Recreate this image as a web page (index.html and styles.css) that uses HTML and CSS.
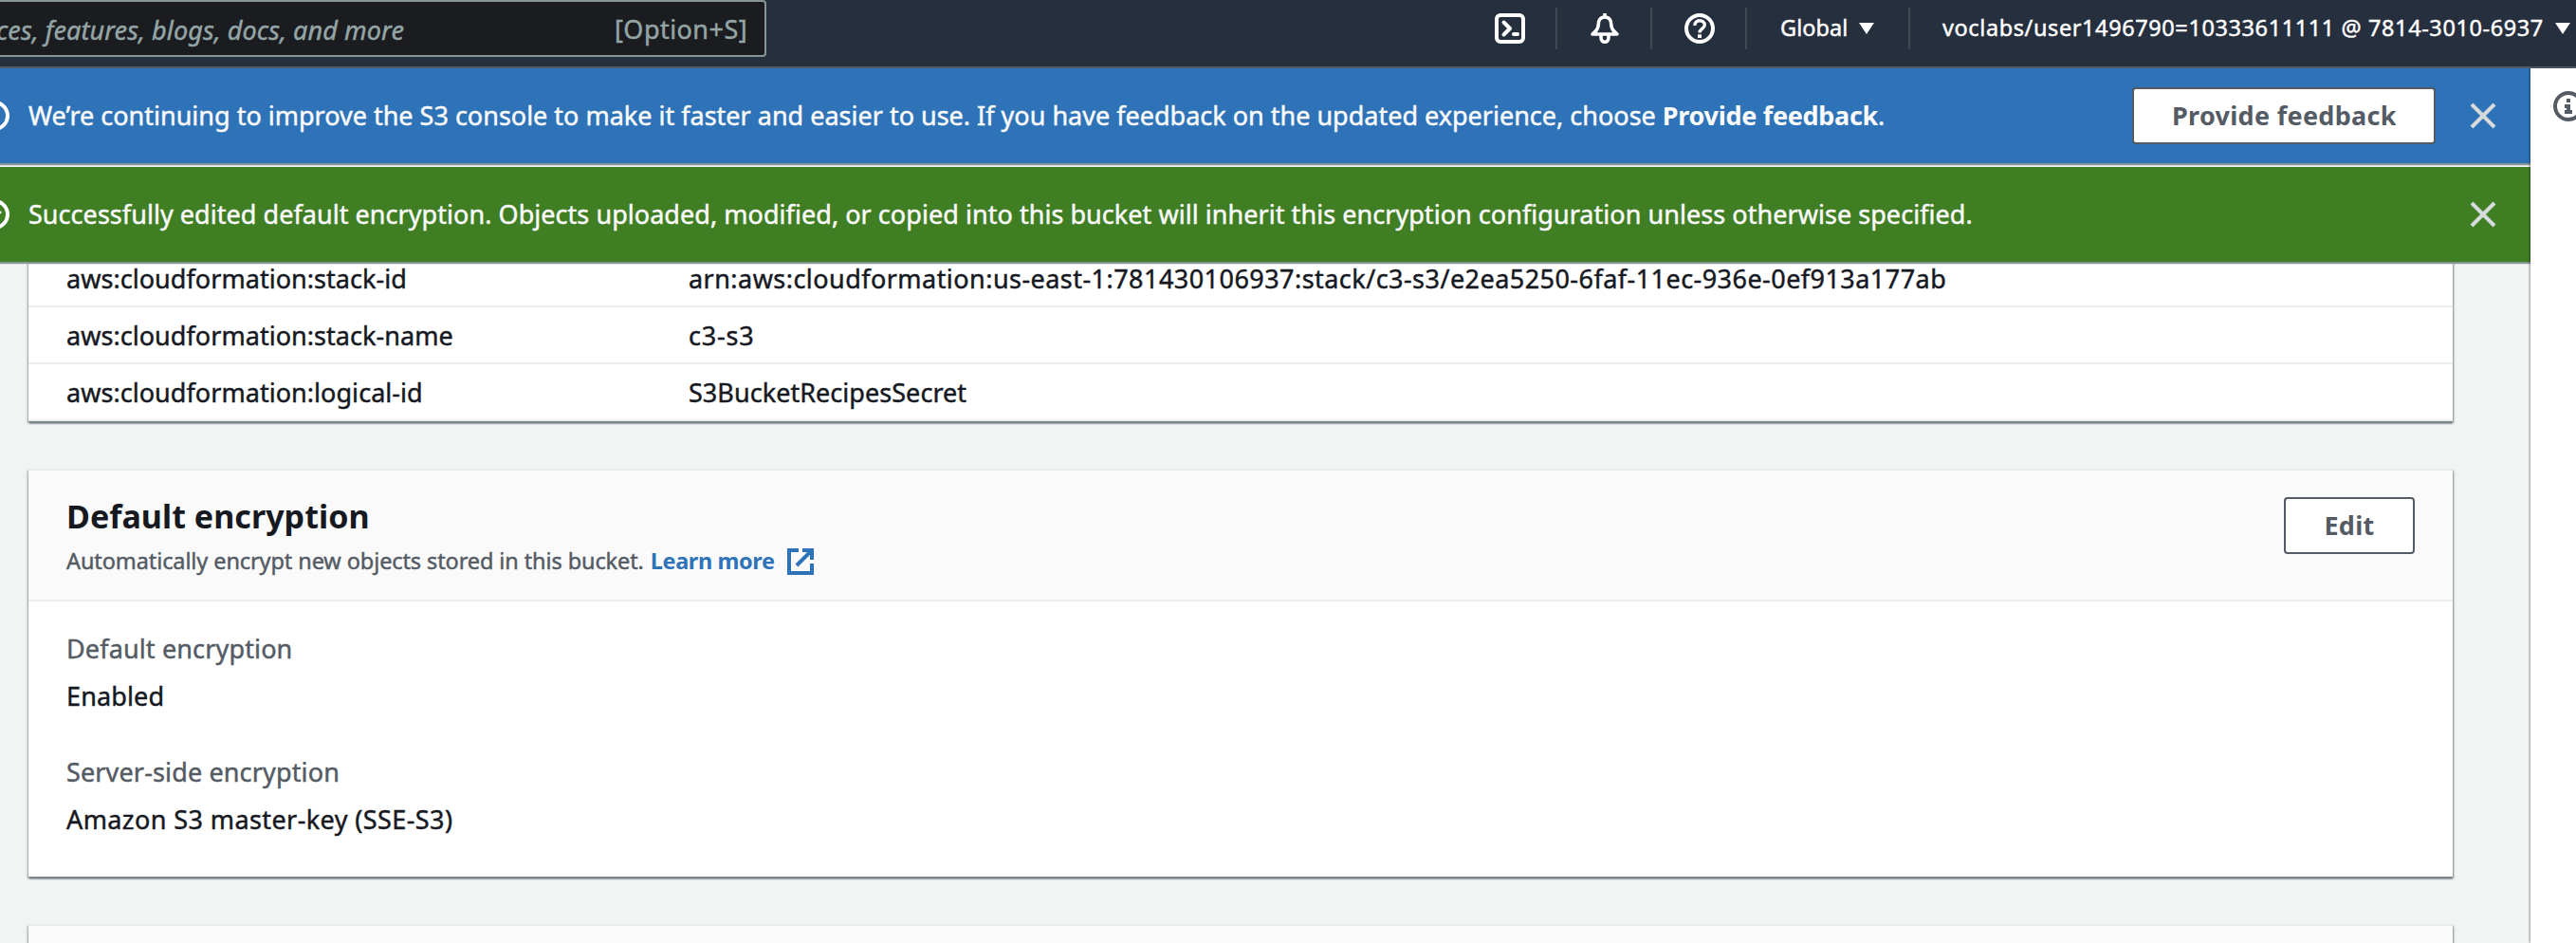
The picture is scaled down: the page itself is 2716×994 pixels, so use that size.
FILE: index.html
```
<!DOCTYPE html>
<html lang="en">
<head>
<meta charset="utf-8">
<title>S3 Management Console</title>
<link rel="stylesheet" href="styles.css">
</head>
<body>
<header class="topbar">
  <div class="search">
    <span class="search-hint">ces, features, blogs, docs, and more</span>
    <span class="search-key">[Option+S]</span>
  </div>
  <nav class="nav">
    <div class="nav-icon">
      <svg width="32" height="32" viewBox="0 0 32 32" fill="none" stroke="#fff" stroke-width="4"><rect x="2" y="2" width="28" height="28" rx="4"/><path d="M9.500 9.500l6.500 6.500-6.500 6.500" stroke-linejoin="round" stroke-linecap="round"/><path d="M20 22h4" stroke-linecap="round"/></svg>
    </div>
    <div class="nav-icon">
      <svg width="32" height="32" viewBox="0 0 32 32" fill="none" stroke="#fff" stroke-width="3.6"><path d="M16 0v4"/><path d="M16 4c-4.800 0-6.800 3.600-6.800 8 0 4.500-2.200 6.500-6.200 10h26c-4-3.500-6.200-5.500-6.200-10 0-4.400-2-8-6.800-8z" stroke-linejoin="round"/><path d="M12 22v3.500c0 2.900 1.800 4.700 4 4.700s4-1.800 4-4.700V22"/></svg>
    </div>
    <div class="nav-icon">
      <svg width="32" height="32" viewBox="0 0 32 32" fill="none" stroke="#fff" stroke-width="4"><circle cx="16" cy="16" r="14"/><path d="M10.800 13c0-3.300 2.200-5.200 5.200-5.200s5.300 1.900 5.300 4.500c0 3.800-5.300 3.900-5.300 8.200" stroke-width="3.400"/><path d="M16 22.300v3.700"/></svg>
    </div>
    <div class="nav-item">Global<i class="caret"></i></div>
    <div class="nav-item account">voclabs/user1496790=10333611111 @ 7814-3010-6937<i class="caret"></i></div>
  </nav>
</header>
<div class="shell">
  <main class="main">
    <div class="flash info">
      <svg class="flash-icon" width="32" height="32" viewBox="0 0 32 32" fill="none" stroke="#fff" stroke-width="4"><circle cx="16" cy="16" r="14"/><path d="M14 10h4M12 16h4v6M12 22h8"/></svg>
      <p class="flash-text">We’re continuing to improve the S3 console to make it faster and easier to use. If you have feedback on the updated experience, choose <b>Provide feedback</b>.</p>
      <button class="btn feedback">Provide feedback</button>
      <svg class="close" width="28" height="28" viewBox="0 0 28 28" stroke="#d5dbdb" stroke-width="4"><path d="M2 2l24 24M26 2L2 26"/></svg>
    </div>
    <div class="flash success">
      <svg class="flash-icon" width="32" height="32" viewBox="0 0 32 32" fill="none" stroke="#fff" stroke-width="4"><circle cx="16" cy="16" r="14"/><path d="M9 16l5 5 8.500-8.500"/></svg>
      <p class="flash-text">Successfully edited default encryption. Objects uploaded, modified, or copied into this bucket will inherit this encryption configuration unless otherwise specified.</p>
      <svg class="close" width="28" height="28" viewBox="0 0 28 28" stroke="#d5dbdb" stroke-width="4"><path d="M2 2l24 24M26 2L2 26"/></svg>
    </div>
    <div class="content">
      <section class="card tags">
        <div class="row"><span>aws:cloudformation:stack-id</span><span class="arn">arn:aws:cloudformation:us-east-1:781430106937:stack/c3-s3/e2ea5250-6faf-11ec-936e-0ef913a177ab</span></div>
        <div class="row"><span>aws:cloudformation:stack-name</span><span class="short">c3-s3</span></div>
        <div class="row"><span>aws:cloudformation:logical-id</span><span>S3BucketRecipesSecret</span></div>
      </section>
      <section class="card">
        <div class="card-head">
          <div>
            <h2>Default encryption</h2>
            <p class="desc"><span>Automatically encrypt new objects stored in this bucket.</span><a>Learn more</a>
              <svg width="28" height="28" viewBox="0 0 28 28" fill="none" stroke="#2e73b8" stroke-width="4"><path d="M12 2H2v24h24V16M16 2h10v10M26 2L10 18"/></svg></p>
          </div>
          <button class="btn">Edit</button>
        </div>
        <dl class="fields">
          <div><dt>Default encryption</dt><dd>Enabled</dd></div>
          <div><dt>Server-side encryption</dt><dd class="algo">Amazon S3 master-key (SSE-S3)</dd></div>
        </dl>
      </section>
      <section class="card next"></section>
    </div>
  </main>
  <aside class="help">
    <svg width="32" height="32" viewBox="0 0 32 32" fill="none" stroke="#545b64" stroke-width="4"><circle cx="16" cy="16" r="14"/><path d="M14 10h4M12 16h4v6M12 22h8"/></svg>
  </aside>
</div>
</body>
</html>
```
FILE: styles.css
```
* { box-sizing: border-box; }
body {
  margin: 0;
  height: 994px;
  overflow: hidden;
  display: flex;
  flex-direction: column;
  background: #f2f3f3;
  color: #16191f;
  font: 400 27px/50px "Noto Sans", "Open Sans", sans-serif;
  letter-spacing: 0.045px;
  -webkit-text-stroke: 0.45px currentColor;
  white-space: nowrap;
}
p, h2, dl, dd { margin: 0; }
svg { display: block; flex: none; }
b, a, h2, button { -webkit-text-stroke: 0; }

.topbar {
  flex: none;
  height: 72px;
  display: flex;
  justify-content: space-between;
  align-items: flex-start;
  background: #262f3e;
  border-bottom: 2px solid #545b64;
}
.search {
  width: 808px;
  height: 60px;
  display: flex;
  justify-content: space-between;
  padding: 5px 18px 0 0;
  background: #1a1c20;
  border: 2px solid #879596;
  border-left: 0;
  border-radius: 0 4px 4px 0;
  color: #95a5a6;
}
.search-hint {
  width: 426px;
  display: flex;
  justify-content: flex-end;
  font-style: italic;
  letter-spacing: 0.1px;
}
.search-key { letter-spacing: 0.45px; margin-top: -1px; }
.nav {
  display: flex;
  align-items: center;
  height: 44px;
  margin-top: 8px;
  color: #fff;
  font-size: 23.5px;
}
.nav-icon {
  width: 100px;
  height: 44px;
  padding-left: 2px;
  display: flex;
  align-items: center;
  justify-content: center;
  border-right: 2px solid #414750;
}
.nav-item {
  height: 44px;
  width: 172px;
  padding-left: 35px;
  line-height: 42px;
  display: flex;
  border-right: 2px solid #414750;
}
.account { width: 702px; padding-left: 34px; border: 0; letter-spacing: 0.6px; }
.caret {
  margin: 16px 0 0 12px;
  width: 0;
  height: 0;
  border: 8px solid transparent;
  border-bottom: 0;
  border-top: 12px solid #fff;
}

.shell { flex: 1; display: flex; min-height: 0; }
.main { width: 2668px; display: flex; flex-direction: column; }
.help {
  flex: 1;
  padding: 24px 0 0 24px;
  background: #fff;
  overflow: hidden;
  box-shadow: -1px 0 2px rgba(0, 7, 22, 0.4);
  position: relative;
}

.flash {
  flex: none;
  height: 100px;
  display: flex;
  align-items: center;
  color: #fafafa;
  padding-right: 36px;
  box-shadow: 0 2px 1px #879596;
  position: relative;
}
.info { background: #2e73b8; margin-bottom: 4px; letter-spacing: 0; }
.success { background: #3f7e23; }
.flash-icon { margin: 0 20px 0 -22px; }
.flash-text { flex: 1; }
.flash-text b { letter-spacing: -0.3px; }
.close { margin-left: 36px; }

.btn {
  height: 60px;
  padding: 0 40px;
  background: #fff;
  border: 2px solid #545b64;
  border-radius: 4px;
  color: #545b64;
  font: 700 27px/50px "Noto Sans", "Open Sans", sans-serif;
  letter-spacing: 0.3px;
}
.feedback { width: 320px; }

.content { flex: 1; min-height: 0; padding: 0 82px 0 30px; overflow: hidden; }
.card {
  background: #fff;
  margin-bottom: 50px;
  border-top: 2px solid #eaeded;
  box-shadow: 0 2px 2px -0.5px #77828a, 1px 2px 2px rgba(0, 28, 36, 0.35), -1px 2px 2px rgba(0, 28, 36, 0.35);
}
.tags { border: 0; margin-top: -12px; }
.row {
  height: 60px;
  display: grid;
  grid-template-columns: 656px 1fr;
  align-items: center;
  padding: 2px 0 0 40px;
  border-bottom: 2px solid #eaeded;
}
.arn { letter-spacing: 0.455px; }
.short { letter-spacing: 0.8px; }
.card-head {
  height: 138px;
  padding: 26px 40px 0;
  display: flex;
  justify-content: space-between;
  align-items: flex-start;
  background: #fafafa;
  border-bottom: 2px solid #eaeded;
}
.card-head .btn { width: 138px; margin-top: 2px; }
h2 { font-size: 34px; line-height: 44px; letter-spacing: 0.04px; }
.desc {
  display: flex;
  margin-top: 9px;
  font-size: 23.5px;
  line-height: 32px;
  color: #545b64;
  letter-spacing: -0.1px;
}
.desc a { color: #2e73b8; font-weight: 700; margin: 0 13px 0 7px; letter-spacing: -0.4px; }
.desc svg { margin-top: 3px; }
.fields {
  height: 290px;
  padding: 25px 40px 0;
  display: flex;
  flex-direction: column;
  gap: 30px;
}
dt { color: #545b64; letter-spacing: 0.14px; }
dd { letter-spacing: 0.14px; }
.algo { letter-spacing: 0.41px; }
.next { height: 100px; background: #fafafa; }
```
